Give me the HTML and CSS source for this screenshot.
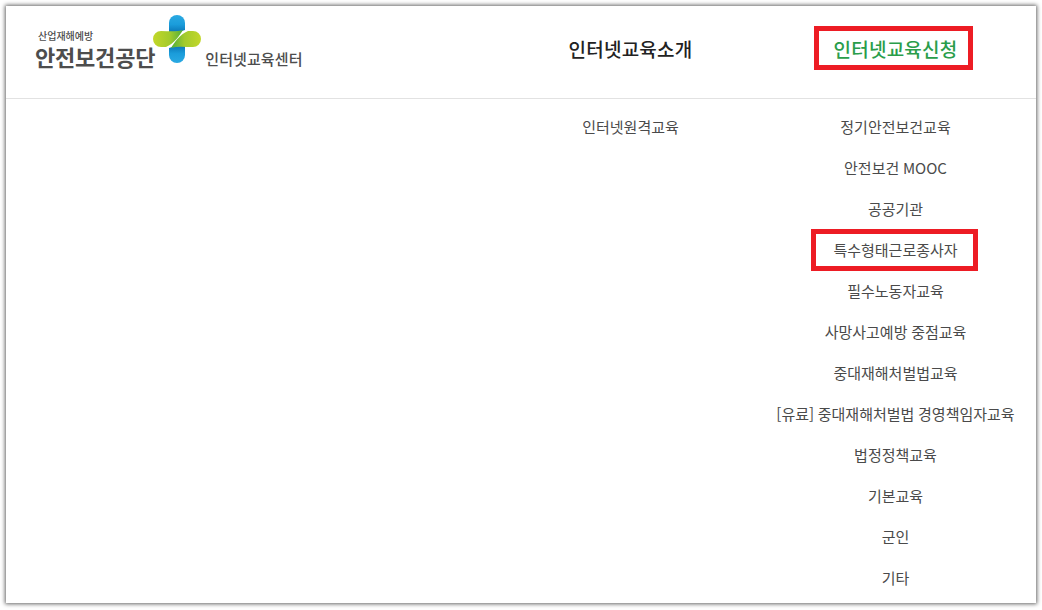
FILE: index.html
```html
<!DOCTYPE html>
<html lang="ko">
<head>
  <meta charset="UTF-8">
  <meta name="viewport" content="width=device-width, initial-scale=1.0">
  <title>인터넷교육센터</title>
  <link rel="stylesheet" href="styles.css">
</head>
<body>
<div class="frame">
  <header class="header">
    <a class="brand" href="#">
      <div class="brand-name">
        <span class="brand-small">산업재해예방</span>
        <span class="brand-big">안전보건공단</span>
      </div>
      <svg class="brand-mark" width="48" height="48" viewBox="0 0 48 48">
        <defs>
          <linearGradient id="blue" x1="0" y1="0" x2="0" y2="1">
            <stop offset="0" stop-color="#2aa9e2"/>
            <stop offset="0.55" stop-color="#1b9ddb"/>
            <stop offset="1" stop-color="#0b78b8"/>
          </linearGradient>
          <linearGradient id="green" x1="0" y1="0" x2="1" y2="0">
            <stop offset="0" stop-color="#c2d72a"/>
            <stop offset="0.55" stop-color="#a3cb2c"/>
            <stop offset="1" stop-color="#4fae3a"/>
          </linearGradient>
          <g id="half">
            <path fill="url(#blue)" d="M16 8a8 8 0 0 1 16 0v7c-5 2-11 2-16 2z"/>
            <path fill="url(#green)" d="M8 16C16 16 24 17 30 15C27 20 21 29 13 32H8a8 8 0 0 1 0-16z"/>
          </g>
        </defs>
        <use href="#half"/>
        <use href="#half" transform="rotate(180 24 24)"/>
      </svg>
      <span class="brand-sub">인터넷교육센터</span>
    </a>
    <nav class="menu">
      <a class="menu-title" href="#">인터넷교육소개</a>
      <a class="menu-title active marked" href="#">인터넷교육신청</a>
    </nav>
  </header>

  <div class="submenu">
    <ul class="sub-col">
      <li><a href="#">인터넷원격교육</a></li>
    </ul>
    <ul class="sub-col">
      <li><a href="#">정기안전보건교육</a></li>
      <li><a href="#">안전보건 MOOC</a></li>
      <li><a href="#">공공기관</a></li>
      <li><a class="marked" href="#">특수형태근로종사자</a></li>
      <li><a href="#">필수노동자교육</a></li>
      <li><a href="#">사망사고예방 중점교육</a></li>
      <li><a href="#">중대재해처벌법교육</a></li>
      <li><a href="#">[유료] 중대재해처벌법 경영책임자교육</a></li>
      <li><a href="#">법정정책교육</a></li>
      <li><a href="#">기본교육</a></li>
      <li><a href="#">군인</a></li>
      <li><a href="#">기타</a></li>
    </ul>
  </div>
</div>
</body>
</html>
```

FILE: styles.css
```css
* {
  box-sizing: border-box;
}
html, body {
  margin: 0;
  background: #ffffff;
}
body {
  padding: 6px;
  height: 610px;
  overflow: hidden;
  font-family: "Noto Sans CJK KR", "Noto Sans", sans-serif;
}
a {
  color: inherit;
  text-decoration: none;
}
.frame {
  height: 597px;
  background: #ffffff;
  box-shadow: 0 0 4px 1px #666666;
  overflow: hidden;
}
.header {
  display: flex;
  justify-content: space-between;
  height: 93px;
  padding-right: 8px;
  border-bottom: 1px solid #e2e2e2;
}
.brand {
  display: flex;
  align-items: flex-start;
  padding: 9px 0 0 29px;
  color: #4d4d4d;
}
.brand-name {
  display: flex;
  flex-direction: column;
  padding-top: 15px;
}
.brand-small {
  font-size: 10px;
  line-height: 11px;
  padding-left: 3px;
  font-weight: 500;
}
.brand-big {
  font-size: 22px;
  line-height: 30px;
  font-weight: 700;
  letter-spacing: -0.2px;
}
.brand-mark {
  margin-left: -2px;
}
.brand-sub {
  font-size: 15px;
  line-height: 22px;
  font-weight: 500;
  letter-spacing: 0.1px;
  margin: 33px 0 0 4px;
}
.menu {
  display: grid;
  grid-template-columns: 265px 265px;
  align-items: center;
  justify-items: center;
  padding-bottom: 7px;
}
.menu-title {
  position: relative;
  font-size: 19px;
  letter-spacing: 0.2px;
  font-weight: 500;
  color: #222222;
}
.menu-title.active {
  color: #2a9d4a;
}
.submenu {
  display: grid;
  grid-template-columns: 265px 265px;
  justify-content: end;
  padding: 7px 8px 0 0;
}
.sub-col {
  list-style: none;
  margin: 0;
  padding: 0;
  text-align: center;
}
.sub-col li {
  height: 41px;
  line-height: 41px;
  font-size: 15px;
  word-spacing: -0.5px;
  color: #4a4a4a;
}
.sub-col a {
  position: relative;
  display: inline-block;
}
.marked::after {
  content: "";
  position: absolute;
  top: -9px;
  bottom: -8px;
  left: -20px;
  right: -16px;
  border: 5px solid #ed1c24;
}
.sub-col .marked::after {
  top: 0;
  bottom: -1px;
  left: -22px;
  right: -20px;
}
```
